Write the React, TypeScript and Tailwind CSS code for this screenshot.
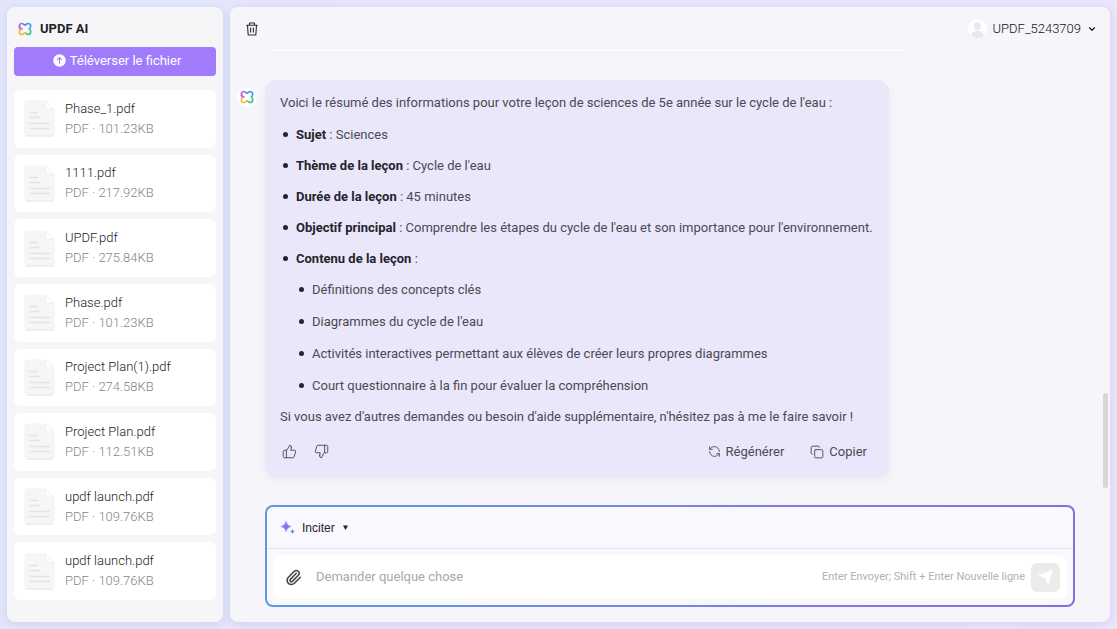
import React from 'react';
import {
	ChevronDown,
	Copy,
	Paperclip,
	RefreshCcw,
	ThumbsDown,
	ThumbsUp,
} from 'lucide-react';

interface FileItem {
	id: number;
	name: string;
	size: string;
}

const files: FileItem[] = [
	{ id: 1, name: 'Phase_1.pdf', size: '101.23KB' },
	{ id: 2, name: '1111.pdf', size: '217.92KB' },
	{ id: 3, name: 'UPDF.pdf', size: '275.84KB' },
	{ id: 4, name: 'Phase.pdf', size: '101.23KB' },
	{ id: 5, name: 'Project Plan(1).pdf', size: '274.58KB' },
	{ id: 6, name: 'Project Plan.pdf', size: '112.51KB' },
	{ id: 7, name: 'updf launch.pdf', size: '109.76KB' },
	{ id: 8, name: 'updf launch.pdf', size: '109.76KB' },
];

const lesson = [
	{ label: 'Sujet', value: 'Sciences' },
	{ label: 'Thème de la leçon', value: "Cycle de l'eau" },
	{ label: 'Durée de la leçon', value: '45 minutes' },
	{
		label: 'Objectif principal',
		value:
			"Comprendre les étapes du cycle de l'eau et son importance pour l'environnement.",
	},
];

const contents = [
	'Définitions des concepts clés',
	"Diagrammes du cycle de l'eau",
	'Activités interactives permettant aux élèves de créer leurs propres diagrammes',
	'Court questionnaire à la fin pour évaluer la compréhension',
];

const bullet =
	'relative before:absolute before:top-2 before:-left-[13px] before:size-[5px] before:rounded-full before:bg-[#24242c]';

const Logo: React.FC = () => (
	<svg
		className="size-[14px] shrink-0"
		viewBox="0 0 28 28"
		fill="none"
		strokeWidth="3.4"
		strokeLinecap="round"
	>
		<path d="M5 14C1.500 11 1.500 3 8 3C11 3 11.500 6 14 6" stroke="#a46be8" />
		<path d="M14 6C16.500 6 17 3 20 3C26.500 3 26.500 10 23 14" stroke="#3d9bf3" />
		<path d="M23 14C26.500 18 26.500 25 20 25C17 25 16.500 22 14 22" stroke="#3fc981" />
		<path d="M14 22C11.500 22 11 25 8 25C1.500 25 1.500 18 5 15" stroke="#f6b936" />
		<path d="M3 9.500C3.500 12 4.500 13 8 14" stroke="#b96fd8" />
	</svg>
);

const FileIcon: React.FC = () => (
	<svg className="h-[37px] w-[31px] shrink-0" viewBox="0 0 31 37" fill="none">
		<path
			d="M3.500 1H20.500L30 9.500V33Q30 36 27 36H3.500Q1 36 1 33V4Q1 1 3.500 1Z"
			fill="#f6f6f8"
			stroke="#f3f3f5"
		/>
		<path d="M2 36H29" stroke="#e8e8eb" strokeLinecap="round" />
		<path d="M21.500 1V6Q21.500 9 24.500 9H29.500Z" fill="#fff" stroke="#f0f0f3" />
		<path d="M5.500 12.500H14M5.500 17.500H16M5.500 23.500H26M5.500 28.500H26" stroke="#e4e4e7" strokeWidth="1.500" />
	</svg>
);

const TrashIcon: React.FC = () => (
	<svg
		className="size-[14px]"
		viewBox="0 0 14 14"
		fill="none"
		stroke="#2b2b33"
		strokeWidth="1.1"
		strokeLinejoin="round"
	>
		<path d="M1.300 3.200H12.700M4.500 3V1H9.500V3M2.500 3.200L3.200 13H10.800L11.500 3.200M5.600 5.600V10.500M8.400 5.600V10.500" />
	</svg>
);

const Sidebar: React.FC = () => (
	<aside className="flex w-[216px] shrink-0 flex-col rounded-lg bg-[#f6f6f9] px-[7px] pb-[22px] shadow-[0_2px_8px_rgba(90,80,160,0.14)]">
		<div className="flex h-10 items-center gap-2 px-1 pt-1">
			<Logo />
			<h1 className="font-bold text-[#222228]">UPDF AI</h1>
		</div>
		<button className="flex h-[29px] shrink-0 items-center justify-center gap-1 rounded bg-[#a07cfd] pb-[2px] pl-1 text-white">
			<svg className="size-[13px]" viewBox="0 0 13 13" fill="none">
				<circle cx="6.5" cy="6.5" r="6.2" fill="#fff" />
				<path d="M6.500 9.700V3.600M4.200 5.800L6.500 3.500L8.800 5.800" stroke="#a07cfd" strokeWidth="1.100" />
			</svg>
			Téléverser le fichier
		</button>
		<ul className="mt-[14px] flex flex-1 flex-col gap-[7px]">
			{files.map((file) => (
				<li
					key={file.id}
					className="flex flex-1 items-center gap-[10px] rounded-md bg-white px-[10px]"
				>
					<FileIcon />
					<div className="leading-5 font-light">
						<p className="text-[#1c1c22]">{file.name}</p>
						<p className="text-[#86868c]">PDF · {file.size}</p>
					</div>
				</li>
			))}
		</ul>
	</aside>
);

const Header: React.FC = () => (
	<header className="flex h-[43px] shrink-0 items-center justify-between pr-[13px] pl-[15px]">
		<button aria-label="Supprimer">
			<TrashIcon />
		</button>
		<button className="flex items-center gap-[6px] font-light text-[#101014]">
			<svg className="size-[19px]" viewBox="0 0 19 19">
				<circle cx="9.5" cy="9.5" r="9.5" fill="#fff" />
				<ellipse cx="9.5" cy="7.3" rx="3.4" ry="4" fill="#e9e9ec" />
				<path d="M3 16.500C4 12.500 7 12 9.500 12S15 12.500 16 16.500Q13 19 9.500 19T3 16.500Z" fill="#e9e9ec" />
			</svg>
			UPDF_5243709
			<ChevronDown className="size-[10px]" strokeWidth={2.6} />
		</button>
	</header>
);

const Answer: React.FC = () => (
	<div className="flex items-start gap-2 pl-[7px]">
		<div className="mt-[7px] flex size-5 shrink-0 items-center justify-center rounded-full bg-white">
			<Logo />
		</div>
		<article className="max-w-[624px] flex-1 rounded-xl bg-[#e9e7f9] pt-3 pr-3 pb-[15px] pl-[15px] leading-[21px] text-[#4a4a54] shadow-[0_3px_8px_rgba(60,60,100,0.07)]">
			<p>
				Voici le résumé des informations pour votre leçon de sciences de 5e
				année sur le cycle de l'eau :
			</p>
			<ul className="mt-[11px] flex flex-col gap-[10px] pl-4">
				{lesson.map((item) => (
					<li key={item.label} className={bullet}>
						<strong className="font-bold text-[#24242c]">{item.label}</strong> : {item.value}
					</li>
				))}
				<li className={bullet}>
					<strong className="font-bold text-[#24242c]">Contenu de la leçon</strong> :
					<ul className="mt-[10px] flex flex-col gap-[11px] pl-4">
						{contents.map((content) => (
							<li key={content} className={bullet}>
								{content}
							</li>
						))}
					</ul>
				</li>
			</ul>
			<p className="mt-[10px]">
				Si vous avez d'autres demandes ou besoin d'aide supplémentaire,
				n'hésitez pas à me le faire savoir !
			</p>
			<div className="mt-[14px] flex items-center px-[2px]">
				<button aria-label="J'aime">
					<ThumbsUp className="size-[15px]" strokeWidth={1.5} />
				</button>
				<button className="ml-[17px]" aria-label="Je n'aime pas">
					<ThumbsDown className="size-[15px]" strokeWidth={1.5} />
				</button>
				<button className="ml-auto flex items-center gap-[5px]">
					<RefreshCcw className="size-[13px]" strokeWidth={1.6} />
					Régénérer
				</button>
				<button className="mr-2 ml-[26px] flex items-center gap-[5px]">
					<Copy className="size-[14px]" strokeWidth={1.6} />
					Copier
				</button>
			</div>
		</article>
	</div>
);

const Composer: React.FC = () => (
	<form className="mt-auto mr-[35px] mb-[15px] ml-[35px] rounded-lg bg-linear-to-r from-[#5a9be2] to-[#8b6cda] p-[2px]">
		<div className="rounded-md bg-[#f8f8fe]">
			<div className="flex h-[42px] items-center border-b border-[#e6e6ee] px-[14px]">
				<button
					type="button"
					className="flex items-center font-['Liberation_Sans',sans-serif] text-xs text-[#222228]"
				>
					<svg className="mr-[7px] size-[14px]" viewBox="0 0 14 14">
						<path d="M5 0.500Q5.800 4.700 10 5.500Q5.800 6.300 5 10.500Q4.200 6.300 0 5.500Q4.200 4.700 5 0.500Z" fill="#8c72f0" stroke="#8c72f0" strokeWidth="0.600" />
						<path d="M11.500 8Q11.900 10.100 14 10.500Q11.900 10.900 11.500 13Q11.100 10.900 9 10.500Q11.100 10.100 11.500 8Z" fill="#3f9be8" />
					</svg>
					Inciter
					<svg className="ml-2 size-[5px]" viewBox="0 0 5 5">
						<path d="M0 0.500H5L2.500 5Z" fill="#222228" />
					</svg>
				</button>
			</div>
			<div className="p-[6px]">
				<div className="flex h-11 items-center rounded-lg bg-white pr-[7px] pl-3">
					<button type="button" aria-label="Joindre un fichier">
						<Paperclip className="size-[17px] text-[#444449]" strokeWidth={2.2} />
					</button>
					<input
						type="text"
						aria-label="Demander quelque chose"
						placeholder="Demander quelque chose"
						className="ml-[14px] min-w-0 flex-1 outline-none placeholder:text-[#a8a8ae]"
					/>
					<span className="text-[11px] text-[#b0b0b5]">
						Enter Envoyer; Shift + Enter Nouvelle ligne
					</span>
					<button
						type="submit"
						aria-label="Envoyer"
						className="ml-[6px] flex size-[29px] items-center justify-center rounded-md bg-[#ebebeb]"
					>
						<svg className="size-[15px]" viewBox="0 0 15 15">
							<path d="M14.500 0.500L10 14.500L7.200 8.800L8.800 6.200L6 7.600L0.500 5Z" fill="#fff" stroke="#fff" strokeLinejoin="round" strokeWidth="0.600" />
						</svg>
					</button>
				</div>
			</div>
		</div>
	</form>
);

export default function App() {
	return (
		<div className="flex h-screen gap-[7px] bg-linear-to-r from-[#e3e6fb] to-[#e9e5fa] p-[7px] font-['Roboto',sans-serif] text-[13px]">
			<Sidebar />
			<main className="relative flex min-w-0 flex-1 flex-col rounded-lg bg-[#f6f6fa] shadow-[0_2px_8px_rgba(90,80,160,0.14)]">
				<Header />
				{/* Bottom edge of the previous message */}
				<div className="mr-[204px] mb-[29px] ml-[39px] h-px shrink-0 rounded-b-xl bg-white shadow-[0_3px_4px_rgba(60,60,80,0.10)]" />
				<Answer />
				<Composer />
				{/* Scrollbar thumb */}
				<div className="absolute top-[386px] right-[2px] h-[95px] w-[5px] rounded-full bg-[#d6d6da]" />
			</main>
		</div>
	);
}
